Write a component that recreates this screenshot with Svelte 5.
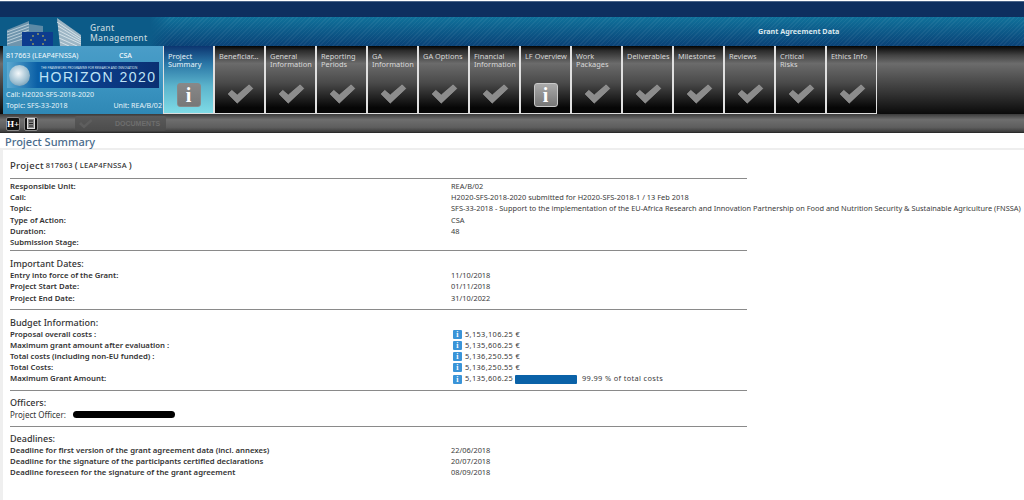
<script>
  const tabs = [
    ['Project', 'Summary', 'active'],
    ['Beneficiar...', '', 'check'],
    ['General', 'Information', 'check'],
    ['Reporting', 'Periods', 'check'],
    ['GA', 'Information', 'check'],
    ['GA Options', '', 'check'],
    ['Financial', 'Information', 'check'],
    ['LF Overview', '', 'info'],
    ['Work', 'Packages', 'check'],
    ['Deliverables', '', 'check'],
    ['Milestones', '', 'check'],
    ['Reviews', '', 'check'],
    ['Critical', 'Risks', 'check'],
    ['Ethics Info', '', 'check']
  ];
  const general = [
    ['Responsible Unit:', 'REA/B/02'],
    ['Call:', 'H2020-SFS-2018-2020 submitted for H2020-SFS-2018-1 / 13 Feb 2018'],
    ['Topic:', 'SFS-33-2018 - Support to the implementation of the EU-Africa Research and Innovation Partnership on Food and Nutrition Security & Sustainable Agriculture (FNSSA)'],
    ['Type of Action:', 'CSA'],
    ['Duration:', '48'],
    ['Submission Stage:', '']
  ];
  const dates = [
    ['Entry into force of the Grant:', '11/10/2018'],
    ['Project Start Date:', '01/11/2018'],
    ['Project End Date:', '31/10/2022']
  ];
  const budget = [
    ['Proposal overall costs :', '5,153,106.25 €'],
    ['Maximum grant amount after evaluation :', '5,135,606.25 €'],
    ['Total costs (including non-EU funded) :', '5,136,250.55 €'],
    ['Total Costs:', '5,136,250.55 €']
  ];
  const deadlines = [
    ['Deadline for first version of the grant agreement data (incl. annexes)', '22/06/2018'],
    ['Deadline for the signature of the participants certified declarations', '20/07/2018'],
    ['Deadline foreseen for the signature of the grant agreement', '08/09/2018']
  ];
</script>

<div class="page">
  <div class="navy"></div>
  <header class="band">
    <svg class="eu" width="74" height="29" viewBox="0 0 74 29">
      <path d="M0 29V13L22 4V29Z" fill="#6f95ad" />
      <path d="M0 15L22 7M0 18L22 10M0 21L22 13M0 24L22 16M0 27L22 20" stroke="#b8cdd9" stroke-width="1" />
      <path d="M22 7L36 9V15H22Z" fill="#5c8aa6" />
      <rect x="15" y="15" width="31" height="14" fill="#0d3c8e" />
      <g fill="#e6d040">
        <circle cx="31" cy="17" r=".8" /><circle cx="36" cy="19" r=".8" /><circle cx="38" cy="23" r=".8" /><circle cx="36" cy="27" r=".8" />
        <circle cx="26" cy="19" r=".8" /><circle cx="24" cy="23" r=".8" /><circle cx="26" cy="27" r=".8" />
      </g>
      <path d="M50 1L74 18V29H53Z" fill="#9db6c5" />
      <path d="M50 5L74 21M51 9L74 23M51 13L74 25M52 17L74 27M52 21L70 29M53 25L62 29" stroke="#d4e1e8" stroke-width="1" />
    </svg>
    <div class="brand">Grant<br />Management</div>
    <div class="band-title">Grant Agreement Data</div>
  </header>

  <nav class="nav">
    <div class="info-panel">
      <div class="panel-row top"><span>817663 (LEAP4FNSSA)</span><span class="csa">CSA</span></div>
      <div class="horizon">
        <span class="globe"></span>
        <div class="h-text">
          <div class="h-small">THE FRAMEWORK PROGRAMME FOR RESEARCH AND INNOVATION</div>
          <div class="h-big">HORIZON 2020</div>
        </div>
      </div>
      <div class="panel-row">Call: H2020-SFS-2018-2020</div>
      <div class="panel-row"><span>Topic: SFS-33-2018</span><span>Unit: REA/B/02</span></div>
    </div>
    {#each tabs as t}
      <div class="tab" class:active={t[2] === 'active'}>
        <div class="tab-label">{t[0]}<br />{t[1]}</div>
        {#if t[2] === 'check'}
          <svg class="check" width="28" height="22" viewBox="0 0 30 24">
            <path d="M2 12L6 8L12 13L25 2L29 6L12 22Z" fill="#8c8c8c" stroke="#a5a5a5" stroke-width=".6" />
          </svg>
        {:else}
          <div class="info-icon" class:dark={t[2] === 'active'}>i</div>
        {/if}
      </div>
    {/each}
  </nav>

  <div class="toolbar">
    <span class="tool">H+</span>
    <span class="tool doc">
      <svg width="8" height="11" viewBox="0 0 8 11"><rect x=".5" y=".5" width="7" height="10" fill="#888" stroke="#ddd" /><path d="M2 3H6M2 5.500H6M2 8H6" stroke="#222" /></svg>
    </span>
    <div class="doc-btn">
      <svg width="15" height="11" viewBox="0 0 15 11"><path d="M1 6L3 4L6 7L13 1L14.500 3L6 10.500Z" fill="#5e5e5e" /></svg>
      <span>DOCUMENTS</span>
    </div>
  </div>

  <div class="title">Project Summary</div>

  <main class="content">
    <div class="project-head"><span class="p-big">Project</span> <span class="p-num">817663</span> <span class="p-big">(</span> <span class="p-num">LEAP4FNSSA</span> <span class="p-big">)</span></div>
    <hr />
    <section class="first">
      {#each general as r}
        <div class="row"><b>{r[0]}</b><span>{r[1]}</span></div>
      {/each}
    </section>
    <hr />
    <section>
      <h3>Important Dates:</h3>
      {#each dates as r}
        <div class="row"><b>{r[0]}</b><span>{r[1]}</span></div>
      {/each}
    </section>
    <hr />
    <section>
      <h3>Budget Information:</h3>
      {#each budget as r}
        <div class="row"><b>{r[0]}</b><span class="money"><i class="mini">i</i>{r[1]}</span></div>
      {/each}
      <div class="row"><b>Maximum Grant Amount:</b><span class="money"><i class="mini">i</i>5,135,606.25 €<span class="blue"></span>99.99 % of total costs</span></div>
    </section>
    <hr />
    <section class="tight">
      <h3>Officers:</h3>
      <div class="officer"><span>Project Officer:</span><span class="black"></span></div>
    </section>
    <hr />
    <section class="tight">
      <h3>Deadlines:</h3>
      {#each deadlines as r}
        <div class="row"><b>{r[0]}</b><span>{r[1]}</span></div>
      {/each}
    </section>
  </main>
</div>

<style>
  :global(body) { margin: 0; background: #fff; }
  .page { width: 1024px; height: 500px; overflow: hidden; padding-top: 1px; box-sizing: border-box; font-family: "Noto Sans", "DejaVu Sans", sans-serif; font-size: 7.400px; color: #333; background: #fff; }
  .navy { height: 15px; background: #0e2f5f; border-top: 1px solid #4a6488; }
  .band { height: 29px; display: flex; position: relative; background: linear-gradient(90deg, #0c5b88 0, #0c5b88 150px, rgba(12,91,136,0) 170px), repeating-linear-gradient(135deg, rgba(255,255,255,.05) 0 1px, transparent 1px 3px), linear-gradient(#10729b, #0a4277); }
  .eu { margin-left: 7px; flex: none; }
  .brand { margin-left: 9px; padding-top: 6px; color: #c3d6de; font-size: 8.500px; line-height: 10px; letter-spacing: .3px; font-weight: 500; }
  .band-title { position: absolute; left: 758px; top: 9px; color: #dbe8ee; font-weight: 700; font-size: 7.200px; }
  .nav { height: 68px; display: flex; padding-left: 3px; background: linear-gradient(#050505, #444 14%, #6c6c6c 26%, #333 70%, #0a0a0a); }
  .info-panel { width: 160px; box-sizing: border-box; padding: 4px 1px 0 3px; background: linear-gradient(#4a9dc8, #3a93c0 60%, #2f88b5); color: #e6f3f8; flex: none; font-size: 7.100px; }
  .panel-row { display: flex; justify-content: space-between; height: 11px; line-height: 11px; }
  .panel-row.top { height: 10px; line-height: 10px; padding-right: 30px; color: #f2f8fb; }
  .csa { font-weight: 500; }
  .horizon { display: flex; align-items: center; height: 26px; margin: 2px 3px 1px 1px; padding-left: 2px; background: linear-gradient(90deg, #5ba9d0, #0a5fa6 20%, #0b3c88 60%, #0a2f72); }
  .globe { width: 21px; height: 21px; border-radius: 50%; flex: none; background: radial-gradient(circle at 45% 40%, #f4f8fa, #9fc0d2 55%, #57819c); }
  .h-text { margin-left: 9px; white-space: nowrap; }
  .h-small { font-size: 3.100px; line-height: 4px; color: #d7e4ef; margin-left: 2px; }
  .h-big { font-family: "Liberation Sans", sans-serif; font-size: 14px; line-height: 14px; letter-spacing: 1.500px; color: #bfe4f6; }
  .tab { width: 49px; flex: none; border-left: 1px solid #e0e0e0; border-right: 1px solid #e0e0e0; border-bottom: 1px solid #ddd; height: 67px; display: flex; flex-direction: column; align-items: center; color: #d8d8d8; background: linear-gradient(#030303, #2c2c2c 7%, #6b6b6b 26%, #4a4a4a 55%, #060606 92%); }
  .tab.active { color: #e8f3f8; background: linear-gradient(#0c3570, #2a76a6 26%, #5cb4cc 60%, #7fdbe6); }
  .tab-label { align-self: stretch; padding: 7px 0 0 4px; height: 26px; box-sizing: border-box; line-height: 7.500px; font-size: 7.400px; white-space: nowrap; overflow: hidden; }
  .check { margin-top: 11px; }
  .info-icon { margin-top: 11px; width: 24px; height: 24px; border-radius: 3px; box-sizing: border-box; border: 1px solid #c8c8c8; background: linear-gradient(#aaa, #767676); color: #fff; text-align: center; font: 700 20px/22px "Liberation Serif", serif; }
  .info-icon.dark { border-color: #888; background: linear-gradient(#888, #777); }
  .toolbar { height: 19px; display: flex; align-items: center; padding-left: 6px; gap: 4px; background: linear-gradient(#3a3a3a, #6e6e6e 30%, #5e5e5e 70%, #3a3a3a 95%, #1a1a1a); }
  .tool { width: 14px; height: 14px; border-radius: 2px; background: #111; border: 1px solid #8a8a8a; box-sizing: border-box; color: #fff; font: 700 9px/12px "Liberation Serif", serif; display: flex; align-items: center; justify-content: center; }
  .doc-btn { margin-left: 33px; width: 91px; height: 15px; box-sizing: border-box; padding-left: 3px; display: flex; align-items: center; background: linear-gradient(#5a5a5a, #4c4c4c); border-radius: 2px; color: #6e6e6e; font-family: "Liberation Sans", sans-serif; font-size: 7px; font-weight: 700; }
  .doc-btn span { margin-left: 22px; }
  .title { height: 15px; padding-left: 5px; font: 500 11px/17px "Noto Sans", sans-serif; color: #4a6c8c; border-bottom: 2px solid #eee; }
  .content { width: 737px; height: 352px; margin-left: 3px; padding-left: 7px; box-shadow: -3px 0 0 #efefef; white-space: nowrap; }
  .project-head { height: 28px; box-sizing: border-box; padding-top: 9px; line-height: 12px; color: #333; }
  .p-big { font-size: 9.500px; font-weight: 500; letter-spacing: .3px; }
  .p-num { font-size: 7.500px; vertical-align: 1px; font-weight: 500; letter-spacing: .2px; }
  hr { margin: 0; border: 0; height: 1px; background: #8a8a8a; }
  section { padding: 6px 0 5px; }
  section.first { padding: 2px 0; }
  section.tight { padding-top: 5px; }
  h3 { margin: 0; font-size: 9px; font-weight: 500; line-height: 13px; color: #333; }
  .row { height: 11.200px; line-height: 11.200px; display: grid; grid-template-columns: 441px 1fr; }
  .row b { font-size: 7.750px; font-weight: 600; color: #333; }
  .row span { color: #3a3a3a; }
  .money { display: flex; align-items: center; letter-spacing: .35px; }
  .mini { width: 9px; height: 9px; margin: 0 3px 0 2px; flex: none; background: #3a94d8; color: #fff; font: 700 8px/9px "Liberation Serif", serif; text-align: center; border-radius: 1px; }
  .blue { width: 62px; height: 9px; margin: 0 5px 0 -5px; background: #0a62a8; border-radius: 1px; flex: none; }
  .officer { display: flex; align-items: center; height: 12px; font-size: 8px; }
  .black { width: 102px; height: 7px; background: #000; border-radius: 4px; margin-left: 7px; }
</style>
